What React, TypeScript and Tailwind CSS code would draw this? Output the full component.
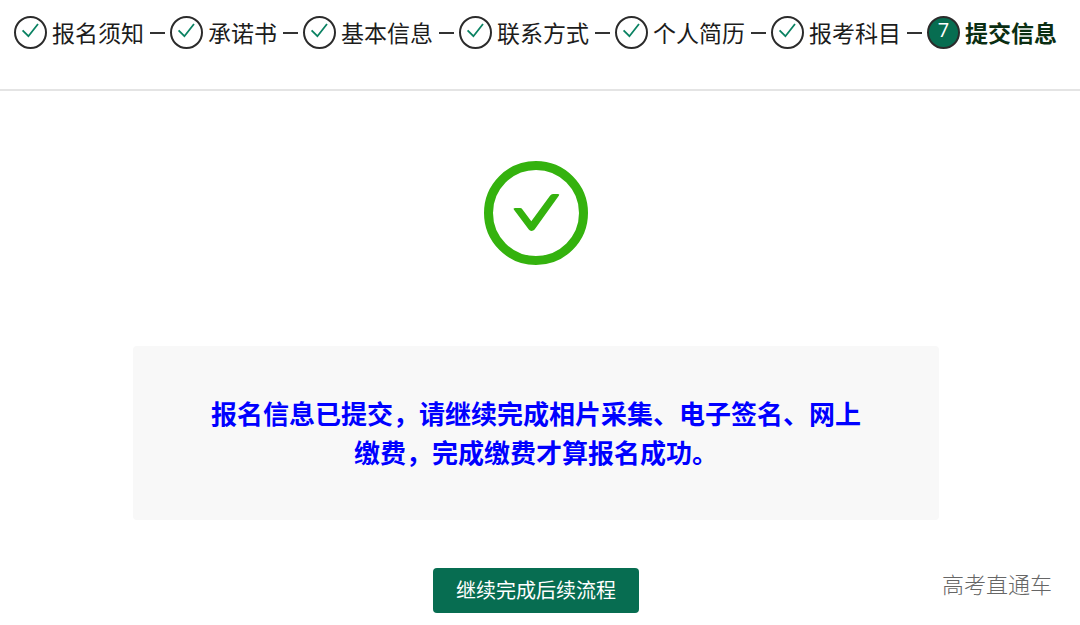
import { Fragment } from "react";
import clsx from "clsx";

interface Step {
  id: number;
  label: string;
}

const steps: Step[] = [
  { id: 1, label: "报名须知" },
  { id: 2, label: "承诺书" },
  { id: 3, label: "基本信息" },
  { id: 4, label: "联系方式" },
  { id: 5, label: "个人简历" },
  { id: 6, label: "报考科目" },
  { id: 7, label: "提交信息" },
];

const CURRENT_STEP = 7;

const StepMark: React.FC<{ step: Step }> = ({ step }) => {
  const active = step.id === CURRENT_STEP;

  return (
    <span
      className={clsx(
        "flex size-[33px] shrink-0 justify-center rounded-full border-2 border-[#2b2b2b]",
        active ? "bg-[#076d51] font-['Open_Sans',sans-serif] text-xl leading-6 text-white" : "bg-white"
      )}
    >
      {active ? (
        step.id
      ) : (
        <svg viewBox="0 0 29 29" className="size-full" fill="none" stroke="#0a8262" strokeWidth="1.8" aria-hidden="true">
          <path d="M6.6 12.4 L12.4 18.2 L22 6" />
        </svg>
      )}
    </span>
  );
};

const StepBar: React.FC = () => (
  <nav className="border-b-2 border-[#e4e4e4] px-[14px] pt-4 pb-10">
    <ol className="flex flex-wrap items-center gap-[5px]">
      {steps.map((step, index) => (
        <Fragment key={step.id}>
          {index > 0 && (
            <li aria-hidden="true" className="flex w-4 justify-center">
              <span className="h-[2px] w-[15px] bg-[#333]" />
            </li>
          )}
          <li
            aria-current={step.id === CURRENT_STEP ? "step" : undefined}
            className="flex items-start gap-[5px]"
          >
            <StepMark step={step} />
            <span
              className={clsx(
                "text-[23px] leading-8 whitespace-nowrap",
                step.id === CURRENT_STEP ? "font-bold text-[#0a2e12]" : "text-[#1c1c1c]"
              )}
            >
              {step.label}
            </span>
          </li>
        </Fragment>
      ))}
    </ol>
  </nav>
);

const SuccessIcon: React.FC = () => (
  <svg viewBox="0 0 104 104" className="size-[104px]" aria-hidden="true">
    <circle cx="52" cy="52" r="47.5" fill="none" stroke="#34b20e" strokeWidth="9" />
    <path
      d="M30 48.8 Q28.8 47 31 47 H36 Q37.5 47 38.5 48.4 L47.3 60.3 L66 34.7 Q67.2 33 69 33 H74 Q76 33 74.8 34.8 L50.6 68.6 Q49.4 70 47.5 70 Q45.8 70 44.8 68.6 Z"
      fill="#34b20e"
    />
  </svg>
);

export default function App() {
  return (
    <div className="relative bg-white font-['Noto_Sans_CJK_SC',sans-serif]">
      <StepBar />

      <main className="flex flex-col items-center pt-[70px] pr-2 pb-3">
        <SuccessIcon />

        <p className="mt-[81px] w-full max-w-[806px] rounded-sm bg-[#f8f8f8] px-[78px] pt-[47px] pb-[49px] text-center text-[26px] leading-[39px] font-bold text-[#0000ff]">
          报名信息已提交，请继续完成相片采集、电子签名、网上缴费，完成缴费才算报名成功。
        </p>

        <button
          type="button"
          className="mt-12 rounded-sm bg-[#076d51] px-[23px] pt-[7px] pb-[9px] text-xl leading-[29px] text-white"
        >
          继续完成后续流程
        </button>
      </main>

      {/* watermark */}
      <span className="pointer-events-none absolute right-7 bottom-[26px] text-[22px] leading-8 font-light text-[#666]">
        高考直通车
      </span>
    </div>
  );
}
